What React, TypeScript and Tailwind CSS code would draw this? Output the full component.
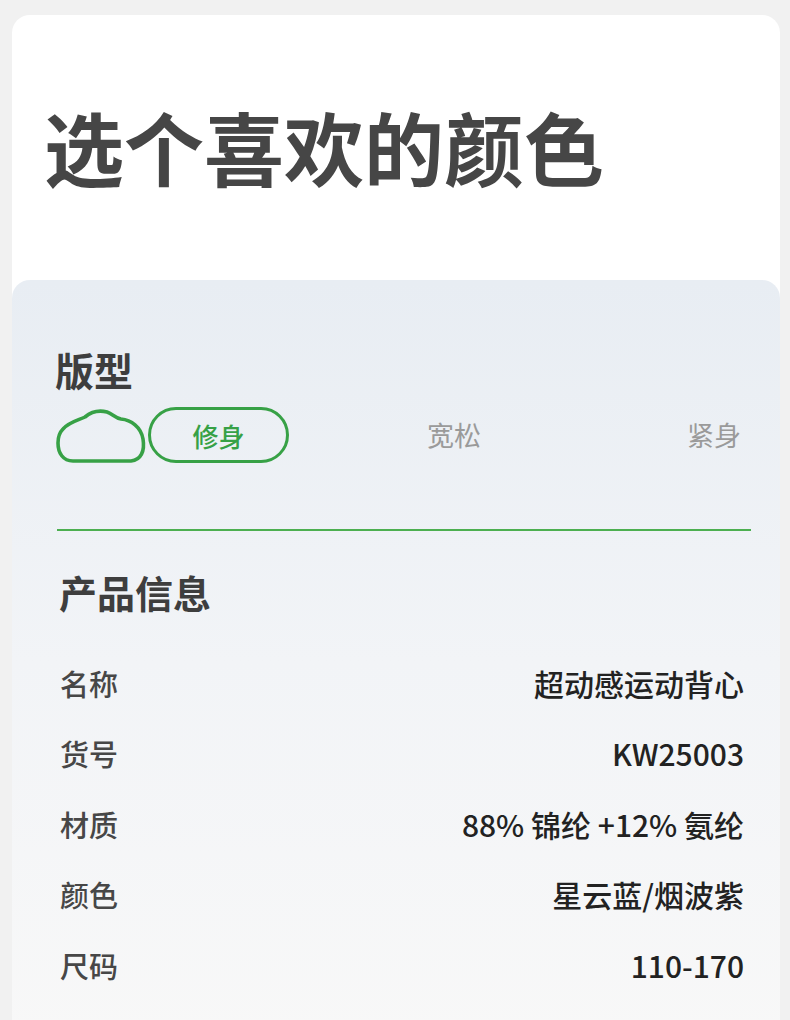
import React from "react";

const font = { fontFamily: '"Noto Sans CJK SC", "Noto Sans", sans-serif' };

const rows = [
  { label: "名称", value: "超动感运动背心" },
  { label: "货号", value: "KW25003" },
  { label: "材质", value: "88% 锦纶 +12% 氨纶" },
  { label: "颜色", value: "星云蓝/烟波紫" },
  { label: "尺码", value: "110-170" },
];

function Cloud() {
  return (
    <svg width="92" height="60" viewBox="0 0 92 60" className="shrink-0">
      <path
        d="M8 24 C 14 17, 24 15, 30 12 C 36 7, 44 5, 52 7 C 58 9, 60 13, 66 14 C 76 15, 86 22, 88 34 C 90 46, 86 55, 76 56 L 18 56 C 8 56, 3 48, 3 38 C 3 31, 5 27, 8 24 Z"
        fill="none"
        stroke="#37a146"
        strokeWidth="3.6"
        strokeLinejoin="round"
      />
    </svg>
  );
}

export default function App() {
  return (
    <div className="min-h-[1020px] bg-[#f1f1f1] pl-[12px] pr-[10px] pt-[15px] overflow-hidden" style={font}>
      <div className="bg-white rounded-t-[18px]">
        <div className="h-[265px] flex items-center pl-[32px] pb-[6px]">
          <h1 className="text-[80px] font-bold text-[#464646] leading-none">
            选个喜欢的颜色
          </h1>
        </div>

        <div className="rounded-t-[18px] bg-gradient-to-b from-[#e8edf3] via-[#f2f4f7] to-[#f8f8f8] pl-[43px] pr-[29px] pt-[64px] pb-[40px] min-h-[740px]">
          <div className="text-[39px] font-bold text-[#3e3e3e] leading-[50px]">版型</div>

          <div className="flex items-center mt-[11px] h-[60px]">
            <Cloud />
            <div className="ml-[1px] w-[141px] h-[56px] rounded-full border-[3.5px] border-[#37a146] flex items-center justify-center text-[26px] font-medium text-[#37a146]">
              修身
            </div>
            <div className="ml-[138px] text-[27px] text-[#9a9a9a]">宽松</div>
            <div className="ml-auto mr-[10px] text-[27px] text-[#9a9a9a]">紧身</div>
          </div>

          <div className="mt-[64px] ml-[2px] h-[2px] bg-[#4caf50]" />

          <div className="mt-[36px] ml-[4px] text-[38px] font-bold text-[#3e3e3e] leading-[50px]">产品信息</div>

          <div className="mt-[31px] ml-[5px] mr-[7px] flex flex-col">
            {rows.map((r) => (
              <div key={r.label} className="h-[70.5px] flex items-center justify-between">
                <span className="text-[29px] font-medium text-[#474747]">{r.label}</span>
                <span className="text-[30px] font-medium text-[#222222]">{r.value}</span>
              </div>
            ))}
          </div>
        </div>
      </div>
    </div>
  );
}
